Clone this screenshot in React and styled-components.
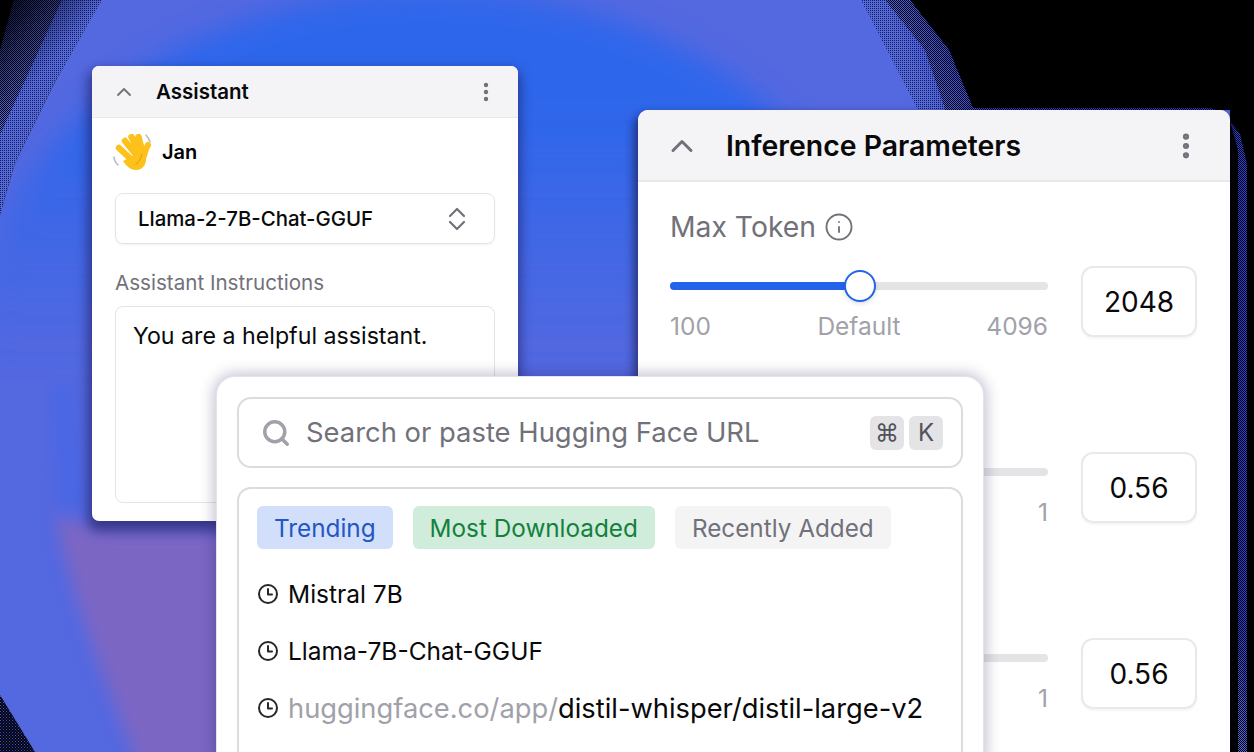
import React from 'react';
import styled, {createGlobalStyle} from 'styled-components';
import {ChevronUp, EllipsisVertical, Info, Search} from 'lucide-react';

const GlobalStyle = createGlobalStyle`
  html, body {
    margin: 0;
    background: #000;
  }
  * {
    box-sizing: border-box;
  }
`;

const Stage = styled.div`
  position: relative;
  width: 1254px;
  height: 752px;
  overflow: hidden;
  background: #000;
  font-family: Inter, "Liberation Sans", sans-serif;
  color: #000;
`;

const Backdrop = styled.svg`
  position: absolute;
  inset: 0;
  width: 1254px;
  height: 752px;
`;

// floating windows on the canvas
const Window = styled.section`
  position: absolute;
  left: ${p => p.$left}px;
  top: ${p => p.$top}px;
  width: ${p => p.$width}px;
  height: ${p => p.$height}px;
  background: #fff;
  overflow: hidden;
  border-radius: ${p => p.$radius}px;
  box-shadow: ${p => p.$shadow};
`;

const Header = styled.header`
  display: flex;
  align-items: center;
  height: ${p => p.$height}px;
  padding: ${p => p.$padding};
  background: #f4f4f6;
  border-bottom: ${p => p.$line}px solid #e8e8ea;
  color: #71717a;
`;

const Title = styled.h2`
  flex: 1;
  margin: 0 0 0 ${p => p.$gap}px;
  font-size: ${p => p.$size}px;
  font-weight: 600;
  color: #09090b;
`;

const AssistantBody = styled.div`
  display: flex;
  flex-direction: column;
  padding: 16px 23px 0;
`;

const Persona = styled.div`
  display: flex;
  align-items: center;
  height: 36px;
  margin-left: -2px;
  gap: 9px;
  font-size: 20px;
  font-weight: 600;
`;

const ModelSelect = styled.div`
  display: flex;
  align-items: center;
  justify-content: space-between;
  height: 51px;
  margin-top: 23px;
  padding: 0 28px 0 22px;
  border: 1px solid #e4e4e7;
  border-radius: 8px;
  box-shadow: 0 1px 2px rgba(0, 0, 0, 0.06);
  font-size: 20.4px;
  font-weight: 500;
  color: #09090b;
`;

const FieldLabel = styled.div`
  margin-top: 27px;
  height: 24px;
  line-height: 24px;
  font-size: 20.6px;
  color: #71717a;
`;

const Instructions = styled.div`
  height: 197px;
  margin-top: 11px;
  padding: 15px 17px;
  border: 1px solid #e4e4e7;
  border-radius: 8px;
  font-size: 23.2px;
  line-height: 28px;
  color: #09090b;
`;

const ParamsBody = styled.div`
  display: flex;
  flex-direction: column;
  gap: 112px;
  padding: 28px 32px 0;
`;

const ParamLabel = styled.div`
  display: flex;
  align-items: center;
  gap: 8px;
  height: 34px;
  margin-bottom: 22px;
  font-size: 28.3px;
  color: #71717a;
`;

const ParamRow = styled.div`
  display: grid;
  grid-template-columns: 378px 116px;
  column-gap: 33px;
`;

const Slider = styled.div`
  position: relative;
  height: 8px;
  margin-top: 16px;
  border-radius: 4px;
  background: #e4e4e7;
`;

const SliderFill = styled.div`
  height: 8px;
  border-radius: 4px;
  background: #2563eb;
  width: ${p => p.$at}px;
`;

const SliderThumb = styled.div`
  position: absolute;
  top: -12px;
  left: ${p => p.$at}px;
  width: 32px;
  height: 32px;
  margin-left: -16px;
  border-radius: 50%;
  border: 2px solid #2563eb;
  background: #fff;
  box-shadow: 0 2px 4px rgba(0, 0, 0, 0.12);
`;

const Scale = styled.div`
  display: grid;
  grid-template-columns: 1fr auto 1fr;
  margin-top: 22px;
  font-size: 24.5px;
  line-height: 28px;
  color: #a1a1aa;

  span:last-child {
    text-align: right;
    grid-column: 3;
  }
`;

const NumberBox = styled.div`
  display: flex;
  align-items: center;
  justify-content: center;
  height: 71px;
  border: 2px solid #e9e9ec;
  border-radius: 12px;
  box-shadow: 0 2px 2px rgba(0, 0, 0, 0.04);
  font-size: 28px;
  color: #09090b;
`;

const Spotlight = styled.div`
  padding: 20px 20px 0;
`;

const SearchBox = styled.div`
  display: flex;
  align-items: center;
  height: 71px;
  padding: 0 18px 0 22px;
  border: 2px solid #dcdce0;
  border-radius: 14px;
  color: #a1a1aa;
`;

const Placeholder = styled.div`
  flex: 1;
  margin: 0 0 2px 15px;
  font-size: 27.4px;
  color: #71717a;
`;

const Key = styled.kbd`
  display: flex;
  align-items: center;
  justify-content: center;
  width: ${p => p.$width}px;
  height: 34px;
  margin-left: 5px;
  border-radius: 6px;
  background: #e4e4e7;
  font-family: Inter, "DejaVu Sans", sans-serif;
  font-size: 24px;
  color: #52525b;
`;

const ResultsPanel = styled.div`
  margin-top: 19px;
  height: 300px;
  padding: 17px 18px 0;
  border: 2px solid #dcdce0;
  border-radius: 14px;
`;

const Pills = styled.div`
  display: flex;
  gap: 20px;
`;

const Pill = styled.div`
  display: flex;
  align-items: center;
  height: 43px;
  padding: 0 17px;
  border-radius: 6px;
  font-size: 24.3px;
  background: ${p => p.$bg};
  color: ${p => p.$color};
`;

const ResultList = styled.ul`
  display: flex;
  flex-direction: column;
  gap: 27px;
  margin: 30px 0 0;
  padding: 0 0 0 1px;
  list-style: none;
`;

const Result = styled.li`
  display: flex;
  align-items: center;
  gap: 10px;
  height: 30px;
  font-size: ${p => p.$size || 24.5}px;
  color: #09090b;
`;

const Muted = styled.span`
  color: #a1a1aa;
`;

function ClockIcon() {
  return (
    <svg width="20" height="20" viewBox="0 0 20 20" fill="none" stroke="#27272a" strokeWidth="2" strokeLinecap="round" strokeLinejoin="round">
      <circle cx="10" cy="10" r="9"/>
      <path d="M10 5v5.5h4"/>
    </svg>
  );
}

function UpDownIcon() {
  return (
    <svg width="18" height="24" viewBox="0 0 18 24" fill="none" stroke="#71717a" strokeWidth="2.2" strokeLinecap="round" strokeLinejoin="round">
      <path d="M2 9l7-7 7 7M2 15l7 7 7-7"/>
    </svg>
  );
}

// waving hand emoji
function WaveIcon() {
  return (
    <svg width="40" height="37" viewBox="0 0 40 37" fill="none" strokeLinecap="round">
      <path d="M33 1c2 2 3 4 4 7M1 23c0 3 2 6 4 8" stroke="#b9bccb" strokeWidth="1.6"/>
      <path d="M6 14 21 28M12 7l13 16M18.500 3l9 17M25.500 3l4.500 17" stroke="#fcc21b" strokeWidth="6.4"/>
      <path d="M35 11c-2 3-3 7-4 11" stroke="#fcc21b" strokeWidth="6"/>
      <path d="M21 21h12c1 8-2 15-10 15-5 0-9-3-13-9z" fill="#fcc21b"/>
      <path d="M29 20c-1 5-3 8-6 10" stroke="#e09c10" strokeWidth="1"/>
    </svg>
  );
}

function Background() {
  const rimLeft = 'M14 0H103L55 82L15 163L0 215V50Z';
  const rimRight = 'M860 0H910L949 50L973 108L1210 108L1222 112L1240 134L1247 165V752H1238V150L1230 120L918 112Z';
  return (
    <Backdrop viewBox="0 0 1254 752" aria-hidden="true">
      <defs>
        <pattern id="checker" width="2" height="2" patternUnits="userSpaceOnUse">
          <rect width="1" height="1" fill="#000"/>
          <rect x="1" y="1" width="1" height="1" fill="#000"/>
        </pattern>
        <pattern id="quarter" width="2" height="2" patternUnits="userSpaceOnUse">
          <rect width="1" height="1" fill="#000" opacity="0.7"/>
        </pattern>
        <pattern id="sparse" width="3" height="3" patternUnits="userSpaceOnUse">
          <rect width="1" height="1" fill="#3f52e4"/>
          <rect x="1.500" y="1.500" width="1" height="1" fill="#3f52e4"/>
        </pattern>
        <linearGradient id="rimLeft" gradientUnits="userSpaceOnUse" x1="8" y1="8" x2="60" y2="54">
          <stop offset="0" stopColor="#0c1240"/>
          <stop offset="1" stopColor="#5468e0"/>
        </linearGradient>
        <linearGradient id="rimRight" gradientUnits="userSpaceOnUse" x1="905" y1="50" x2="955" y2="26">
          <stop offset="0" stopColor="#5468e0"/>
          <stop offset="1" stopColor="#2f3fd8"/>
        </linearGradient>
        <linearGradient id="core" gradientUnits="userSpaceOnUse" x1="0" y1="110" x2="0" y2="370">
          <stop offset="0" stopColor="#2d66eb"/>
          <stop offset="1" stopColor="#2d66eb" stopOpacity="0"/>
        </linearGradient>
        <filter id="soft" x="-20%" y="-20%" width="140%" height="140%">
          <feGaussianBlur stdDeviation="14"/>
        </filter>
        <filter id="softer" x="-20%" y="-20%" width="140%" height="140%">
          <feGaussianBlur stdDeviation="8"/>
        </filter>
        <clipPath id="blob">
          <path d="M102 0H861L918 110L1230 110V752H35L0 695V215L15 163L55 82Z"/>
        </clipPath>
      </defs>
      {/* dithered rim of the blob */}
      <path d={rimLeft} fill="url(#rimLeft)"/>
      <path d="M14 0H62L30 70L0 135V50Z" fill="url(#checker)"/>
      <path d="M62 0H103L55 82L15 163L0 215V135L30 70Z" fill="url(#quarter)"/>
      <path d={rimRight} fill="url(#rimRight)"/>
      <path d="M885 0H910L949 50L973 108L1210 108L1222 112L1240 134L1247 165V752H1238V150L1230 120L946 112L925 50Z" fill="url(#checker)"/>
      <path d="M860 0H885L925 50L946 112H918Z" fill="url(#quarter)"/>
      <path d="M0 695L35 752H0Z" fill="url(#sparse)"/>
      <g clipPath="url(#blob)">
        <rect width="1254" height="752" fill="#5468e0"/>
        <ellipse cx="430" cy="330" rx="450" ry="340" fill="url(#core)" filter="url(#soft)"/>
        <path d="M52 385L72 385L84 510L60 510Z" fill="#3f66e8" opacity="0.55" filter="url(#softer)"/>
        <path d="M56 515C72 600 108 690 140 770H225V530H100Z" fill="#7c66c4" filter="url(#softer)"/>
      </g>
    </Backdrop>
  );
}

function ParamControl({value, children, label, thumb}) {
  return (
    <div>
      {label && <ParamLabel>{label} <Info size={30} strokeWidth={1.5}/></ParamLabel>}
      <ParamRow>
        <div>
          <Slider>
            {thumb && <SliderFill $at={thumb}/>}
            {thumb && <SliderThumb $at={thumb}/>}
          </Slider>
          {children}
        </div>
        <NumberBox>{value}</NumberBox>
      </ParamRow>
    </div>
  );
}

export default function App() {
  return (
    <>
      <GlobalStyle/>
      <Stage>
        <Background/>

        <Window $left={638} $top={110} $width={592} $height={660} $radius={10} $shadow="-2px 6px 10px 2px rgba(15, 10, 40, 0.55)">
          <Header $height={72} $padding="1px 28px 0 26px" $line={2}>
            <ChevronUp size={36} strokeWidth={2}/>
            <Title $gap={26} $size={28.4}>Inference Parameters</Title>
            <EllipsisVertical size={32} strokeWidth={2.6}/>
          </Header>
          <ParamsBody>
            <ParamControl value="2048" label="Max Token" thumb={190}>
              <Scale><span>100</span><span>Default</span><span>4096</span></Scale>
            </ParamControl>
            <ParamControl value="0.56">
              <Scale><span>1</span></Scale>
            </ParamControl>
            <ParamControl value="0.56">
              <Scale><span>1</span></Scale>
            </ParamControl>
          </ParamsBody>
        </Window>

        <Window $left={92} $top={66} $width={426} $height={455} $radius={7} $shadow="-1px 7px 12px 3px rgba(25, 15, 70, 0.55)">
          <Header $height={52} $padding="0 20px 0 20px" $line={1}>
            <ChevronUp size={24} strokeWidth={1.8}/>
            <Title $gap={20} $size={20.5}>Assistant</Title>
            <EllipsisVertical size={24} strokeWidth={2.4}/>
          </Header>
          <AssistantBody>
            <Persona><WaveIcon/>Jan</Persona>
            <ModelSelect>
              Llama-2-7B-Chat-GGUF
              <UpDownIcon/>
            </ModelSelect>
            <FieldLabel>Assistant Instructions</FieldLabel>
            <Instructions>You are a helpful assistant.</Instructions>
          </AssistantBody>
        </Window>

        <Window $left={217} $top={377} $width={766} $height={400} $radius={18} $shadow="0 0 0 1px #e4e4e7, 0 0 14px 4px rgba(40, 30, 90, 0.26)">
          <Spotlight>
            <SearchBox>
              <Search size={30} strokeWidth={2.8}/>
              <Placeholder>Search or paste Hugging Face URL</Placeholder>
              <Key $width={34}>⌘</Key>
              <Key $width={34}>K</Key>
            </SearchBox>
            <ResultsPanel>
              <Pills>
                <Pill $bg="#d1dffb" $color="#2456c4">Trending</Pill>
                <Pill $bg="#d0ecdb" $color="#15803d">Most Downloaded</Pill>
                <Pill $bg="#f4f4f5" $color="#71717a">Recently Added</Pill>
              </Pills>
              <ResultList>
                <Result><ClockIcon/>Mistral 7B</Result>
                <Result><ClockIcon/>Llama-7B-Chat-GGUF</Result>
                <Result $size={27.3}><ClockIcon/><span><Muted>huggingface.co/app/</Muted>distil-whisper/distil-large-v2</span></Result>
              </ResultList>
            </ResultsPanel>
          </Spotlight>
        </Window>
      </Stage>
    </>
  );
}
